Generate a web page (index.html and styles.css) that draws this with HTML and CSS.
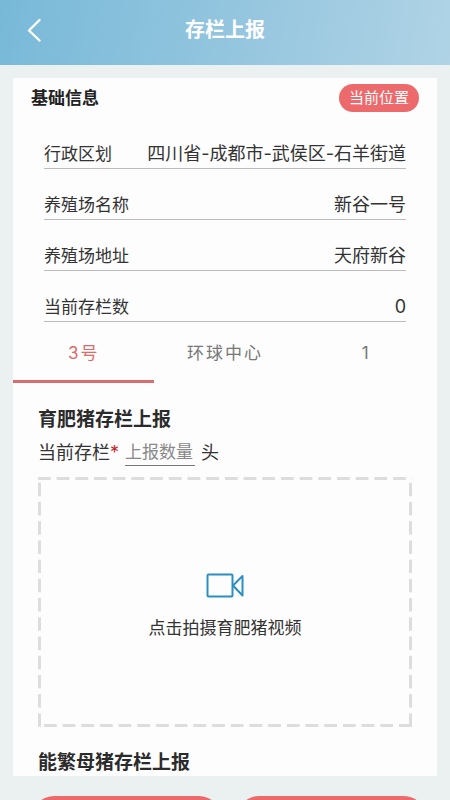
FILE: index.html
```html
<!DOCTYPE html>
<html lang="zh-CN">
<head>
    <meta charset="UTF-8">
    <meta name="viewport" content="width=device-width, initial-scale=1.0">
    <title>存栏上报</title>
    <link rel="stylesheet" href="styles.css">
</head>
<body>
    <!-- Top bar -->
    <header class="navbar">
        <button type="button" class="back" aria-label="返回">
            <svg width="14" height="24" viewBox="0 0 14 24" fill="none" stroke="#fff" stroke-width="2.400">
                <path d="M12.500 2L2 12.500l10.500 10" stroke-linecap="round" stroke-linejoin="round"/>
            </svg>
        </button>
        <h1 class="title">存栏上报</h1>
    </header>

    <main class="card">
        <div class="card-head">
            <h2 class="card-title">基础信息</h2>
            <button type="button" class="location">当前位置</button>
        </div>

        <!-- Farm information -->
        <dl class="info">
            <div class="row"><dt>行政区划</dt><dd>四川省-成都市-武侯区-石羊街道</dd></div>
            <div class="row"><dt>养殖场名称</dt><dd>新谷一号</dd></div>
            <div class="row"><dt>养殖场地址</dt><dd>天府新谷</dd></div>
            <div class="row"><dt>当前存栏数</dt><dd>0</dd></div>
        </dl>

        <div class="tabs" role="tablist">
            <button type="button" class="tab active" role="tab" aria-selected="true">3号</button>
            <button type="button" class="tab" role="tab" aria-selected="false">环球中心</button>
            <button type="button" class="tab" role="tab" aria-selected="false">1</button>
        </div>

        <!-- Report for the selected building -->
        <form class="report">
            <h3 class="report-title">育肥猪存栏上报</h3>
            <div class="field">
                <label for="count">当前存栏<span class="required">*</span></label>
                <input type="text" id="count" class="count" placeholder="上报数量">
                <span>头</span>
            </div>
            <button type="button" class="upload">
                <svg width="38" height="26" viewBox="0 0 38 26" fill="none" stroke="#2b8fc2" stroke-width="2" stroke-linejoin="round">
                    <rect x="1.500" y="1.500" width="25" height="22" rx="1"/>
                    <path d="M27 12.500L36.500 3v19.500z"/>
                </svg>
                <span>点击拍摄育肥猪视频</span>
            </button>
            <h3 class="report-title">能繁母猪存栏上报</h3>
        </form>
    </main>

    <footer class="actions">
        <button type="button" class="action" aria-label="保存"></button>
        <button type="button" class="action" aria-label="提交"></button>
    </footer>
</body>
</html>
```
FILE: styles.css
```css
* {
    box-sizing: border-box;
}
body {
    margin: 0;
    height: 100vh;
    overflow: hidden;
    display: flex;
    flex-direction: column;
    background-color: #ebf1f1;
    color: #333;
    font-family: Inter, "Noto Sans CJK SC", sans-serif;
    font-size: 18px;
    line-height: 26px;
}
h1, h2, h3, dl, dd {
    margin: 0;
}
button {
    border: none;
    padding: 0;
    background: none;
    color: inherit;
    font: inherit;
    cursor: pointer;
}
svg {
    display: block;
}

/* Top bar */
.navbar {
    flex: none;
    display: grid;
    grid-template-columns: 40px 1fr 40px;
    align-items: center;
    padding: 14px 14px 19px;
    background: linear-gradient(100deg, #78b9d8, #93c5de 50%, #b0d3e6);
    color: #fff;
}
.back {
    display: flex;
    justify-content: center;
    padding: 4px 0;
}
.title {
    font-size: 20px;
    text-align: center;
}

/* White card */
.card {
    flex: 1;
    min-height: 0;
    overflow: hidden;
    margin: 13px 13px 0;
    background-color: #fdfdfd;
}
.card-head {
    display: flex;
    justify-content: space-between;
    align-items: center;
    padding: 6px 18px 0;
}
.card-title {
    font-size: 17px;
    color: #222;
}
.location {
    padding: 1px 10px;
    border-radius: 14px;
    background-color: #ec6a6c;
    color: #fff;
    font-size: 15px;
}
.info {
    padding: 6px 31px 0;
}
.row {
    display: flex;
    justify-content: space-between;
    padding: 23px 0 1px;
    border-bottom: 1px solid #bbb;
}
.row dt {
    font-size: 17px;
}

/* Tabs */
.tabs {
    display: grid;
    grid-template-columns: repeat(3, 1fr);
}
.tab {
    padding: 18px 0 14px;
    border-bottom: 3px solid transparent;
    color: #777;
    font-size: 17px;
    letter-spacing: 2px;
}
.tab.active {
    border-color: #d96e70;
    color: #e0696b;
}

/* Report form */
.report {
    padding: 24px 25px 0;
}
.report-title {
    font-size: 19px;
    color: #2b2b2b;
}
.field {
    display: flex;
    align-items: center;
    gap: 6px;
    margin-top: 6px;
}
.required {
    color: #c62828;
}
.count {
    width: 70px;
    padding: 0;
    border: none;
    border-bottom: 1px solid #777;
    background: none;
    font: inherit;
    font-size: 17px;
}
.count::placeholder {
    color: #888;
}
.upload {
    display: flex;
    flex-direction: column;
    align-items: center;
    justify-content: center;
    gap: 16px;
    width: 100%;
    height: 250px;
    margin: 11px 0 23px;
    padding-top: 10px;
    font-size: 17px;
    background:
        linear-gradient(90deg, #ddd 13px, transparent 13px) 0 0 / 19px 3px round no-repeat,
        linear-gradient(270deg, #ddd 13px, transparent 13px) 0 100% / 19px 3px round no-repeat,
        linear-gradient(0deg, #ddd 13px, transparent 13px) 0 0 / 3px 19px no-repeat round,
        linear-gradient(0deg, #ddd 13px, transparent 13px) 100% 0 / 3px 19px no-repeat round;
}

/* Bottom buttons */
.actions {
    flex: none;
    display: grid;
    grid-template-columns: 1fr 1fr;
    gap: 16px;
    height: 24px;
    padding: 20px 24px 0 32px;
}
.action {
    height: 44px;
    border-radius: 22px;
    background-color: #ec6a6c;
}
```
